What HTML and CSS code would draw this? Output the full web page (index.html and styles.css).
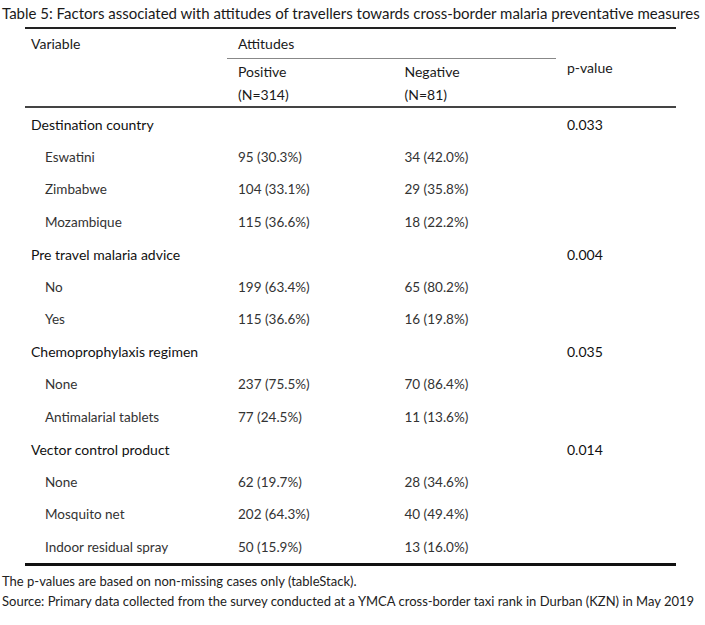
FILE: index.html
```html
<!DOCTYPE html>
<html lang="en">
<head>
    <meta charset="UTF-8">
    <meta name="viewport" content="width=device-width, initial-scale=1.0">
    <title>Table 5</title>
    <link rel="stylesheet" href="styles.css">
</head>
<body>
    <div class="caption">Table 5: Factors associated with attitudes of travellers towards cross-border malaria preventative measures</div>
    <table class="stats">
        <thead>
            <tr class="head-top">
                <th rowspan="2" class="var-head">Variable</th>
                <th colspan="2" class="group-head">Attitudes</th>
                <th rowspan="2" class="p-head">p-value</th>
            </tr>
            <tr class="head-sub">
                <th class="col-pos">Positive<br>(N=314)</th>
                <th class="col-neg">Negative<br>(N=81)</th>
            </tr>
        </thead>
        <tbody>
            <tr class="group"><td>Destination country</td><td></td><td></td><td class="p">0.033</td></tr>
            <tr class="level"><td>Eswatini</td><td>95 (30.3%)</td><td>34 (42.0%)</td><td></td></tr>
            <tr class="level"><td>Zimbabwe</td><td>104 (33.1%)</td><td>29 (35.8%)</td><td></td></tr>
            <tr class="level"><td>Mozambique</td><td>115 (36.6%)</td><td>18 (22.2%)</td><td></td></tr>
            <tr class="group"><td>Pre travel malaria advice</td><td></td><td></td><td class="p">0.004</td></tr>
            <tr class="level"><td>No</td><td>199 (63.4%)</td><td>65 (80.2%)</td><td></td></tr>
            <tr class="level"><td>Yes</td><td>115 (36.6%)</td><td>16 (19.8%)</td><td></td></tr>
            <tr class="group"><td>Chemoprophylaxis regimen</td><td></td><td></td><td class="p">0.035</td></tr>
            <tr class="level"><td>None</td><td>237 (75.5%)</td><td>70 (86.4%)</td><td></td></tr>
            <tr class="level"><td>Antimalarial tablets</td><td>77 (24.5%)</td><td>11 (13.6%)</td><td></td></tr>
            <tr class="group"><td>Vector control product</td><td></td><td></td><td class="p">0.014</td></tr>
            <tr class="level"><td>None</td><td>62 (19.7%)</td><td>28 (34.6%)</td><td></td></tr>
            <tr class="level"><td>Mosquito net</td><td>202 (64.3%)</td><td>40 (49.4%)</td><td></td></tr>
            <tr class="level"><td>Indoor residual spray</td><td>50 (15.9%)</td><td>13 (16.0%)</td><td></td></tr>
        </tbody>
    </table>
    <div class="notes">
        <p>The p-values are based on non-missing cases only (tableStack).</p>
        <p>Source: Primary data collected from the survey conducted at a YMCA cross-border taxi rank in Durban (KZN) in May 2019</p>
    </div>
</body>
</html>
```

FILE: styles.css
```css
body {
    margin: 0;
    padding: 4px 2px 0 2px;
    font-family: Lato, "Open Sans", sans-serif;
    color: #1a1a1a;
    background: #fff;
}
.caption {
    font-size: 15px;
    line-height: 18px;
    white-space: nowrap;
}
.stats {
    margin: 5px 0 0 23px;
    width: 651px;
    border-collapse: collapse;
    table-layout: fixed;
    font-size: 14px;
}
.stats th {
    font-weight: normal;
    text-align: left;
    line-height: 23px;
}
.stats thead {
    border-top: 2px solid #222;
}
.head-top th {
    height: 29px;
    padding: 0;
}
.var-head {
    width: 196px;
    vertical-align: top;
    padding: 3px 0 0 6px !important;
}
.group-head {
    padding-left: 11px !important;
    border-bottom: 1px solid #888;
}
.p-head {
    width: 109px;
    padding-left: 11px !important;
    vertical-align: middle;
}
.col-pos {
    width: 155px;
    padding: 1px 0 0 11px;
    vertical-align: top;
}
.col-neg {
    width: 150px;
    padding: 1px 0 0 13px;
    vertical-align: top;
}
.stats tbody {
    border-top: 2px solid #444;
    border-bottom: 3px solid #111;
}
.stats td {
    height: 32.5px;
    padding: 0 0 0 11px;
    vertical-align: middle;
    white-space: nowrap;
}
.stats td:nth-child(3) {
    padding-left: 13px;
}
.group td:first-child {
    padding-left: 6px;
    color: #111;
}
.level td {
    font-size: 13.5px;
    color: #333;
}
.level td:first-child {
    padding-left: 20px;
}
.p {
    color: #111;
}
.notes {
    margin-top: 5px;
    font-size: 13px;
    color: #222;
}
.notes p {
    margin: 0;
    line-height: 20px;
    white-space: nowrap;
}
```
